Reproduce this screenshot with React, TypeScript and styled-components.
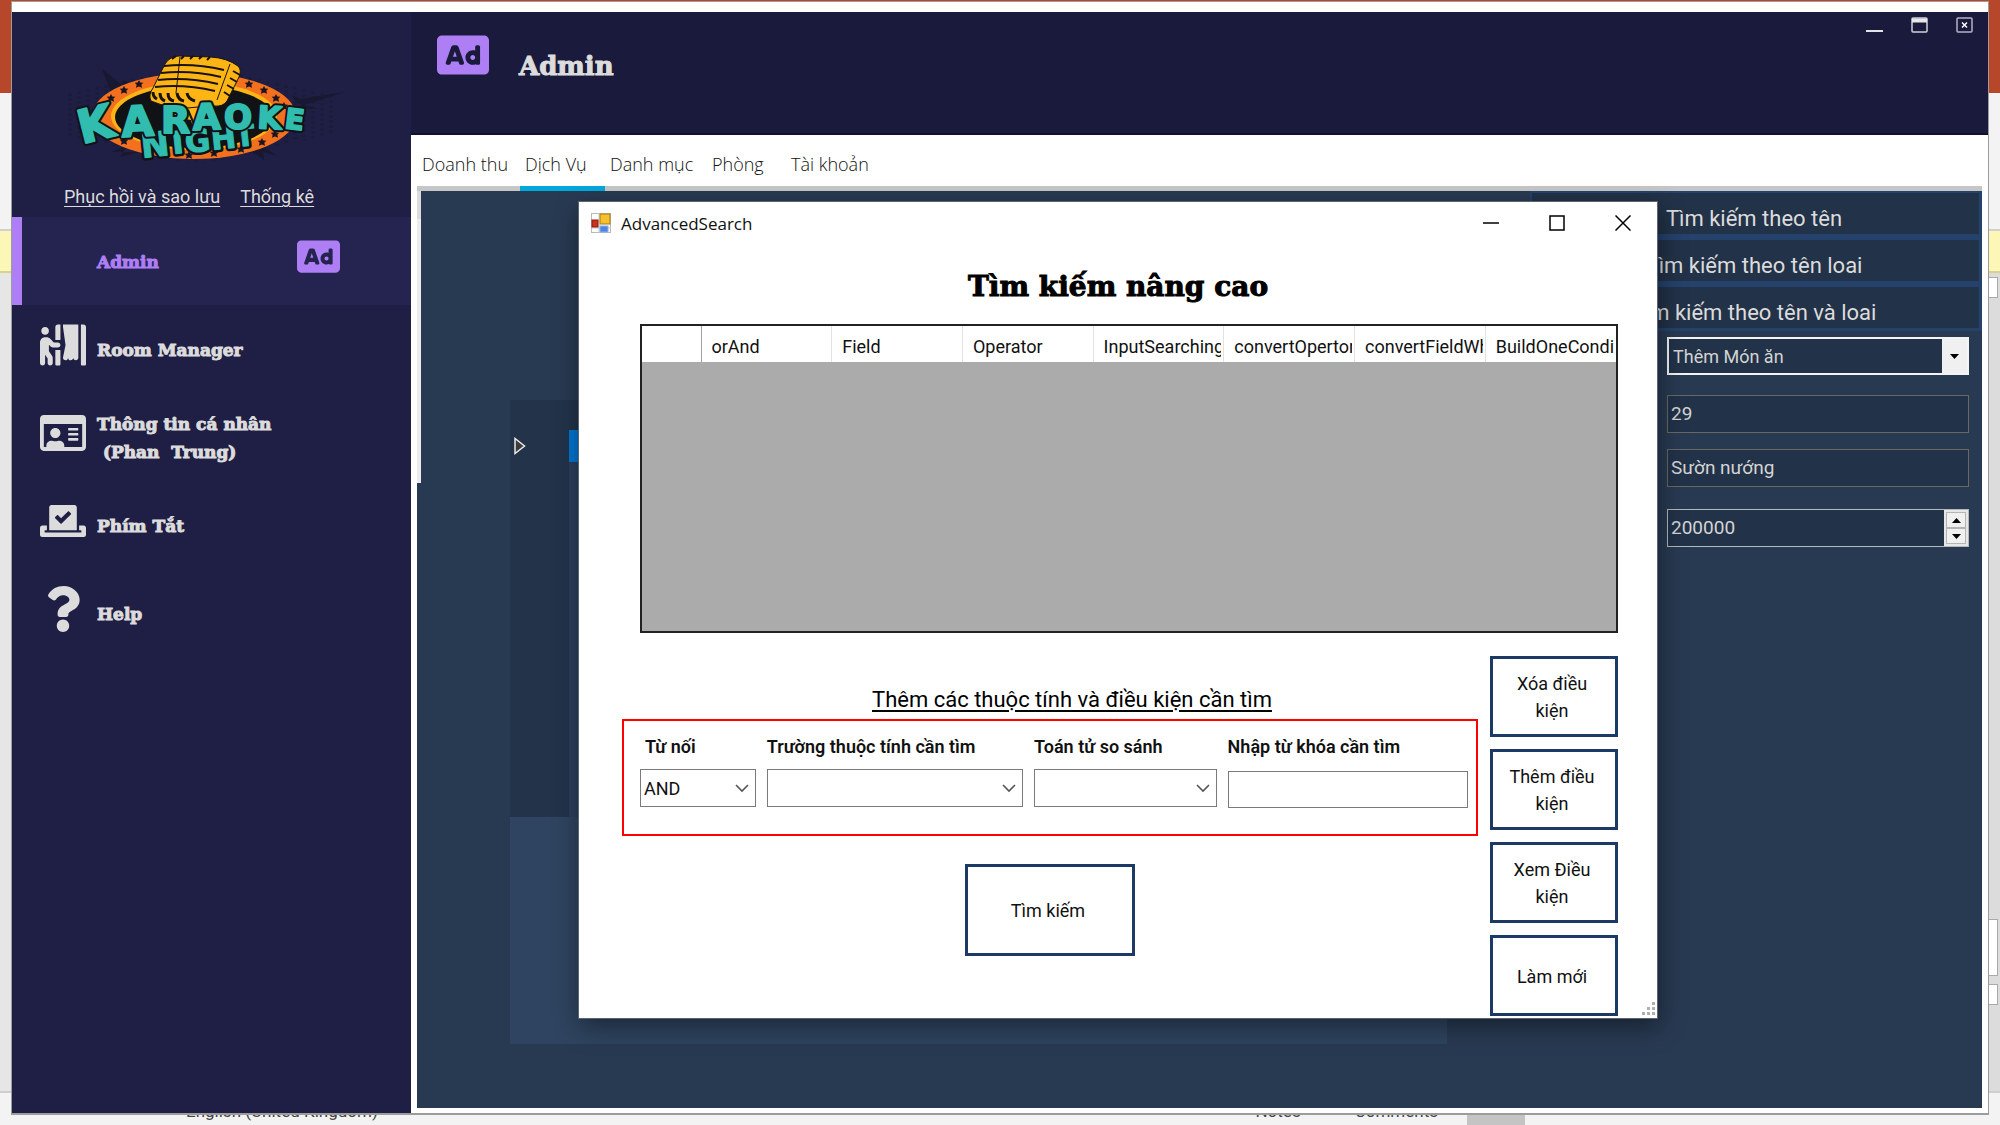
import React from "react";
import styled, { createGlobalStyle } from "styled-components";
import { FaAd, FaPersonBooth, FaRegIdCard, FaVoteYea, FaQuestion } from "react-icons/fa";

const slab = `"DejaVu Serif", serif`;
const sans = `Roboto, "Noto Sans", sans-serif`;

const GlobalStyle = createGlobalStyle`
  * { box-sizing: border-box; }
  body { margin: 0; font-family: ${sans}; font-size: 18px; }
  button, input, select { font: inherit; color: inherit; border-radius: 0; }
`;

/* ---------- Desktop behind the windows ---------- */

const Desktop = styled.div`
  position: relative;
  display: flex;
  flex-direction: column;
  height: 100vh;
  min-height: 1060px;
  overflow: hidden;
  background: #e6e6e6;
`;

const Band = styled.div<{ $h: number; $bg: string; $line?: string }>`
  flex: none;
  height: ${(p) => p.$h}px;
  background: ${(p) => p.$bg};
  border-bottom: ${(p) => (p.$line ? `2px solid ${p.$line}` : "0")};
`;

const Rail = styled.div`
  flex: 1;
  align-self: flex-end;
  display: flex;
  flex-direction: column;
  width: 12px;
  padding: 4px 2px 86px 0;
  background: #dcdcdc;
`;

const RailBox = styled.div<{ $h: number }>`
  height: ${(p) => p.$h}px;
  background: #fff;
  border: 1px solid #a9a9a9;
  & + & { margin-top: 8px; }
  &:nth-child(2) { margin-top: auto; }
`;

const StatusBar = styled.div`
  flex: none;
  display: flex;
  align-items: flex-start;
  gap: 54px;
  height: 34px;
  padding: 8px 475px 0 186px;
  border-top: 2px solid #cfcfcf;
  background: #f3f3f3;
  color: #444;
  font-size: 17px;
  line-height: 20px;
`;

const StatusSpacer = styled.span` flex: 1; `;

const StatusMark = styled.span`
  align-self: stretch;
  width: 58px;
  margin: 0 0 0 -25px;
  background: #c4c4c4;
`;

/* ---------- Main window ---------- */

const AppWindow = styled.div`
  position: absolute;
  inset: 1px 11px 10px 11px;
  display: flex;
  flex-direction: column;
  padding-top: 10px;
  background: #fff;
  border: 1px solid #9c9c9c;
  border-bottom-width: 2px;
`;

const Body = styled.div`
  flex: 1;
  display: flex;
  min-height: 0;
`;

const Sidebar = styled.aside`
  flex: none;
  width: 399px;
  background: #1f1e44;
  color: #dcdcdc;
`;

const Brand = styled.div`
  height: 205px;
  padding: 33px 0 0 48px;
`;

const QuickLinks = styled.div`
  display: flex;
  gap: 20px;
  padding: 4px 0 0 4px;
  font-size: 18px;
  line-height: 24px;
`;

const QuickLink = styled.a`
  color: inherit;
  text-decoration: underline;
  text-underline-offset: 3px;
`;

const NavItem = styled.button<{ $active?: boolean }>`
  display: flex;
  align-items: center;
  gap: 11px;
  width: 100%;
  height: 88px;
  padding: 1px 71px 0 ${(p) => (p.$active ? 75 : 28)}px;
  border: 0;
  border-left: ${(p) => (p.$active ? "10px solid #ae7ef4" : "0")};
  background: ${(p) => (p.$active ? "#25234f" : "transparent")};
  color: ${(p) => (p.$active ? "#ae7ef4" : "inherit")};
  font: bold 17px/28px ${slab};
  -webkit-text-stroke: 1px currentColor;
  text-align: left;
  white-space: pre;
  & > svg { margin-bottom: 10px; }
  & > svg:last-child { margin-left: auto; }
`;

const Main = styled.main`
  flex: 1;
  display: flex;
  flex-direction: column;
  min-width: 0;
`;

const Header = styled.header`
  display: flex;
  align-items: flex-start;
  gap: 30px;
  height: 123px;
  padding: 0 15px 0 26px;
  background: #1a1a3d;
  border-bottom: 2px solid #11112e;
  color: #dcdcdc;
  & > svg { color: #ae7ef4; margin-top: 17px; }
`;

const PageTitle = styled.h1`
  flex: 1;
  margin: 36px 0 0;
  font: bold 26px/36px ${slab};
  -webkit-text-stroke: 1px currentColor;
`;

const WindowButtons = styled.div`
  display: flex;
  gap: 28px;
  padding-top: 5px;
`;

const IconButton = styled.button`
  display: flex;
  padding: 0;
  border: 0;
  background: transparent;
`;

const Tabs = styled.nav`
  display: flex;
  align-items: stretch;
  height: 56px;
  margin: 0 6px;
  border-bottom: 5px solid #c6c6c6;
`;

const Tab = styled.button<{ $w: number; $active?: boolean }>`
  width: ${(p) => p.$w}px;
  margin-bottom: -5px;
  padding: 6px 0 0 5px;
  border: 0;
  border-bottom: ${(p) => (p.$active ? "5px solid #00a8dc" : "5px solid transparent")};
  background: transparent;
  color: #111;
  font-family: "Open Sans", ${sans};
  font-weight: 300;
  font-size: 18px;
  text-align: left;
  white-space: nowrap;
`;

const Panel = styled.section`
  flex: 1;
  display: grid;
  grid-template-columns: 4px 1fr 452px;
  margin: 0 6px 5px;
  background: #283a52;
`;

const Edge = styled.div`
  height: 292px;
  border-top: 28px solid #dcdcdc;
  background: #ececec;
`;

const GridArea = styled.div`
  display: flex;
  padding: 209px 83px 64px 89px;
`;

const BackGrid = styled.div`
  flex: 1;
  background: #2f4460;
`;

const BackRows = styled.div`
  display: grid;
  grid-template: 30px 32px 355px / 59px 1fr;
  background: #22334a;
`;

const BackCell = styled.div<{ $bg?: string }>`
  padding: 7px 4px;
  line-height: 0;
  background: ${(p) => p.$bg ?? "transparent"};
`;

const SearchModes = styled.div`
  display: flex;
  flex-direction: column;
  gap: 6px;
  padding: 2px 3px 3px 2px;
  background: #24426c;
`;

const ModeButton = styled.button`
  height: 41px;
  padding: 11px 3px 0 0;
  border: 0;
  background: #223248;
  color: #dcdcdc;
  font-size: 22px;
  line-height: 30px;
`;

const SideForm = styled.div`
  display: flex;
  flex-direction: column;
  padding: 6px 13px 0 137px;
  color: #d4d4d4;
`;

const DarkBox = styled.div<{ $line: string; $gap: number; $weight?: number }>`
  display: flex;
  height: 38px;
  margin-bottom: ${(p) => p.$gap}px;
  border: ${(p) => p.$weight ?? 1}px solid ${(p) => p.$line};
  background: #223248;
`;

const darkControl = `
  flex: 1;
  min-width: 0;
  border: 0;
  outline: 0;
  background: transparent;
  appearance: none;
`;

const DarkInput = styled.input`
  ${darkControl}
  padding: 0 3px 2px;
  font-size: 19px;
`;

const DarkSelect = styled.select`
  ${darkControl}
  padding: 0 4px;
  font-size: 18px;
`;

const DropArrow = styled.span`
  display: grid;
  place-items: center;
  width: 25px;
  background: #f0f0f0;
`;

const Spinner = styled.span`
  display: flex;
  flex-direction: column;
  width: 24px;
  padding: 2px;
  background: #e6e6e6;
`;

const SpinButton = styled.button`
  flex: 1;
  display: grid;
  place-items: center;
  padding: 0;
  border: 1px solid #b4b4b4;
  background: #f0f0f0;
`;

/* ---------- Advanced search window ---------- */

const Dialog = styled.div`
  position: absolute;
  left: 578px;
  top: 201px;
  width: 1080px;
  padding-bottom: 2px;
  background: #fff;
  border: 1px solid #5c6470;
  box-shadow: 2px 8px 24px rgba(0, 0, 0, 0.42);
  color: #111;
`;

const TitleBar = styled.div`
  display: flex;
  align-items: center;
  gap: 10px;
  height: 42px;
  padding: 0 26px 0 12px;
  font-family: "Open Sans", ${sans};
  font-size: 17px;
`;

const TitleText = styled.span` flex: 1; `;

const TitleButtons = styled.div`
  display: flex;
  gap: 50px;
`;

const DialogTitle = styled.h2`
  margin: 22px 0 16px;
  font: bold 28px/42px ${slab};
  -webkit-text-stroke: 1px currentColor;
  text-align: center;
  color: #000;
`;

const ResultFrame = styled.div`
  height: 309px;
  margin: 0 39px 0 61px;
  border: 2px solid #222;
  background: #ababab;
`;

const ResultTable = styled.table`
  width: 100%;
  table-layout: fixed;
  border-collapse: collapse;
`;

const HeadCell = styled.th<{ $first?: boolean }>`
  width: ${(p) => (p.$first ? "59px" : "auto")};
  height: 36px;
  padding: 6px 2px 0 10px;
  border-right: 1px solid ${(p) => (p.$first ? "#a0a0a0" : "#e2e2e2")};
  background: #fff;
  font-weight: 400;
  font-size: 18px;
  line-height: 24px;
  text-align: left;
  white-space: nowrap;
  &:last-child { border-right: 0; }
`;

const HeadText = styled.span`
  display: block;
  overflow: hidden;
`;

const Lower = styled.div`
  display: flex;
  justify-content: space-between;
  padding: 23px 39px 0 43px;
`;

const Conditions = styled.div`
  display: flex;
  flex-direction: column;
  width: 856px;
`;

const Caption = styled.div`
  padding: 27px 0 0 44px;
  font-size: 22px;
  line-height: 34px;
  text-align: center;
  text-decoration: underline;
  text-underline-offset: 3px;
  color: #000;
`;

const FieldGroup = styled.div`
  display: flex;
  gap: 11px;
  height: 117px;
  margin-top: 2px;
  padding: 14px 8px 0 16px;
  border: 2px solid #f00;
`;

const Field = styled.label<{ $w: number; $indent?: number }>`
  display: flex;
  flex-direction: column;
  gap: 10px;
  width: ${(p) => p.$w}px;
  & > span:first-child {
    padding-left: ${(p) => p.$indent ?? 0}px;
    font-weight: 600;
    font-size: 18px;
    line-height: 24px;
    white-space: nowrap;
  }
`;

const SelectBox = styled.span`
  display: flex;
  align-items: center;
  height: 38px;
  padding-right: 6px;
  border: 1px solid #7a7a7a;
`;

const LightSelect = styled.select`
  ${darkControl}
  height: 100%;
  padding: 0 3px;
`;

const LightInput = styled.input`
  height: 37px;
  margin-top: 2px;
  padding: 0 4px;
  border: 1px solid #7a7a7a;
  outline: 0;
  background: #fff;
`;

const Actions = styled.div`
  display: flex;
  flex-direction: column;
  gap: 12px;
`;

const OutlineButton = styled.button<{ $w: number; $h: number }>`
  width: ${(p) => p.$w}px;
  height: ${(p) => p.$h}px;
  padding: 1px 14px 0 10px;
  border: 3px solid #1b3a66;
  background: #fff;
  font-size: 18px;
  line-height: 27px;
`;

const SubmitRow = styled.div`
  display: flex;
  justify-content: center;
  padding-top: 28px;
`;

const Grip = styled.svg`
  position: absolute;
  right: 2px;
  bottom: 3px;
`;

/* ---------- Drawings ---------- */

const stars = [
  [104, 106], [111, 98], [124, 90], [139, 84], [249, 84], [264, 90], [276, 98], [284, 106],
  [275, 134], [262, 142], [241, 149], [214, 153], [189, 155], [124, 141],
];

const letters: [string, number, number, number, number][] = [
  ["K", 82, 144, 46, -14],
  ["A", 122, 137, 42, -3],
  ["R", 161, 133, 38, 0],
  ["A", 193, 130, 36, -2],
  ["O", 224, 129, 33, 0],
  ["K", 257, 128, 31, 3],
  ["E", 284, 128, 28, 7],
];

const night: [string, number, number, number][] = [
  ["N", 142, 158, 34],
  ["I", 173, 154, 31],
  ["G", 186, 153, 31],
  ["H", 212, 150, 30],
  ["T", 236, 147, 29],
];

const LogoWord = ({ glyphs, color, weight }: { glyphs: (string | number)[][]; color: string; weight: number }) => (
  <g fontFamily="DejaVu Sans" fontWeight="bold" fill={color} stroke={color} strokeWidth={weight} strokeLinejoin="round">
    {glyphs.map(([c, x, y, s, r = -6]) => (
      <text key={x} x={x} y={y} fontSize={s} transform={`rotate(${r} ${x} ${y})`}>{c}</text>
    ))}
  </g>
);

function KaraokeLogo() {
  return (
    <svg width="300" height="132" viewBox="60 45 300 132" role="img" aria-label="Karaoke Night">
      <g fill="#181831">
        {Array.from({ length: 30 }, (_, i) => {
          const x = 70 + i * 9;
          const h = 50 - Math.abs(i - 14) * 2;
          return (
            <path key={i} d={`M${x} ${115 - h}v${h * 2}`} stroke="#1b1b3b" strokeWidth="3" strokeDasharray="3 2" />
          );
        })}
        <path d="M102 69l20 16 2-5 10 6-20 14zM345 92l-45 7-8-4 4 8 22 6-24-1 4 9-14-6zM112 152l16-7-8 12 20-5zM252 152l12 8-1-8 14 4-14-10z" />
      </g>
      <ellipse cx="194" cy="116" rx="102" ry="43" fill="#f3701f" />
      <ellipse cx="194" cy="116" rx="83" ry="34" fill="#fdb515" />
      <ellipse cx="194" cy="117" rx="79" ry="31" fill="#111216" />
      {stars.map(([x, y]) => (
        <path key={`${x}-${y}`} fill="#1b1522"
          d={`M${x} ${y - 4}l1.300 2.600 3 .2-2 2 .8 3-3.100-1.400-3.100 1.400.8-3-2-2 3-.2z`} />
      ))}
      <path d="M163 106h46l-6 22-8 6-4-14-22-4z" fill="#fdb515" />
      <path d="M165 64q5-8 14-8l32 1q16 1 27 9 4 4 1 11l-12 24q-4 6-13 5l-16 1q-24 4-47-6-3-6 2-13z" fill="#fdb515" stroke="#17130c" strokeWidth="1" />
      <g fill="none" stroke="#17130c" strokeWidth="2">
        <path d="M164 66q30-3 60 4M161 73q30-3 60 4M158 80q30-3 60 4M155 87q30-3 60 4" />
        <path d="M180 57l-4 36M230 64l-13 36" strokeWidth="1" />
        <path d="M233 71l7 4M230 78l7 4M227 85l7 4M224 92l6 4" />
        <path d="M153 92q0 5 4 7M160 93q0 6 5 8M168 93q0 7 6 8M177 93q1 7 7 8M187 93q1 6 8 8" strokeWidth="3" />
        <path d="M172 59l4-3M181 59l3-3M190 59l3-3M199 59l3-3M207 60l3-3M195 128l8-20M188 110l6 14" />
      </g>
      <g aria-hidden><LogoWord glyphs={night} color="#111216" weight={6} /></g>
      <LogoWord glyphs={night} color="#30bdb0" weight={1} />
      <g aria-hidden><LogoWord glyphs={letters} color="#111216" weight={6} /></g>
      <LogoWord glyphs={letters} color="#30bdb0" weight={2} />
    </svg>
  );
}

const Chevron = () => (
  <svg width="14" height="9" viewBox="0 0 14 9" fill="none" stroke="#555" strokeWidth="1.600" aria-hidden>
    <path d="M1 1l6 6 6-6" />
  </svg>
);

const Triangle = ({ up }: { up?: boolean }) => (
  <svg width="9" height="5" viewBox="0 0 9 5" aria-hidden>
    <path d={up ? "M0 5L4.500 0 9 5z" : "M0 0h9L4.500 5z"} fill="#000" />
  </svg>
);

const FormIcon = () => (
  <svg width="20" height="20" viewBox="0 0 20 20" aria-hidden>
    <rect x="0.500" y="0.500" width="19" height="19" fill="#fff" stroke="#b9b9b9" />
    <path d="M8 0v20M0 15h20" stroke="#c8c8c8" />
    <rect x="9" y="1" width="10" height="10" fill="#f5c02c" stroke="#a87a10" />
    <rect x="1" y="7" width="6" height="7" fill="#c8321e" stroke="#8d1b0f" />
    <rect x="9" y="13" width="8" height="6" fill="#4c86e0" stroke="#8fb2ee" />
  </svg>
);

const navItems = [
  { label: "Room Manager", icon: <FaPersonBooth size={46} /> },
  { label: "Thông tin cá nhân\n (Phan  Trung)", icon: <FaRegIdCard size={46} /> },
  { label: "Phím Tắt", icon: <FaVoteYea size={46} /> },
  { label: "Help", icon: <FaQuestion size={46} /> },
];

const tabs = [
  { label: "Doanh thu", w: 103 },
  { label: "Dịch Vụ", w: 85 },
  { label: "Danh mục", w: 102 },
  { label: "Phòng", w: 79 },
  { label: "Tài khoản", w: 100 },
];

const columns = ["orAnd", "Field", "Operator", "InputSearching", "convertOpertor", "convertFieldWhere", "BuildOneCondition"];

const actions = ["Xóa điều kiện", "Thêm điều kiện", "Xem Điều kiện", "Làm mới"];

export default function App() {
  return (
    <Desktop>
      <GlobalStyle />
      <Band $h={93} $bg="#b7472a" />
      <Band $h={138} $bg="#f3f3f3" $line="#d0d0d0" />
      <Band $h={42} $bg="#fcf7b6" $line="#d8d28a" />
      <Rail>
        <RailBox $h={21} />
        <RailBox $h={57} />
        <RailBox $h={21} />
      </Rail>
      <StatusBar>
        <span>English (United Kingdom)</span>
        <StatusSpacer />
        <span>Notes</span>
        <span>Comments</span>
        <StatusMark />
      </StatusBar>

      <AppWindow>
        <Body>
          <Sidebar>
            <Brand>
              <KaraokeLogo />
              <QuickLinks>
                <QuickLink href="#backup">Phục hồi và sao lưu</QuickLink>
                <QuickLink href="#stats">Thống kê</QuickLink>
              </QuickLinks>
            </Brand>
            <NavItem $active>
              Admin
              <FaAd size={43} />
            </NavItem>
            {navItems.map((item) => (
              <NavItem key={item.label}>
                {item.icon}
                <span>{item.label}</span>
              </NavItem>
            ))}
          </Sidebar>

          <Main>
            <Header>
              <FaAd size={52} />
              <PageTitle>Admin</PageTitle>
              <WindowButtons>
                <IconButton aria-label="Minimize">
                  <svg width="17" height="17" viewBox="0 0 17 17"><path d="M0 14h17" stroke="#e4e4e4" strokeWidth="2" /></svg>
                </IconButton>
                <IconButton aria-label="Maximize">
                  <svg width="17" height="17" viewBox="0 0 17 17" fill="none" stroke="#d0d0d8"><rect x="1" y="1" width="15" height="14" rx="1" strokeWidth="1.500" /><path d="M1 3.500h15" strokeWidth="4" stroke="#e8e8e8" /></svg>
                </IconButton>
                <IconButton aria-label="Close">
                  <svg width="17" height="17" viewBox="0 0 17 17" fill="none" stroke="#b4b4c4" strokeWidth="1.500"><rect x="1" y="1" width="15" height="14" rx="1" /><path d="M6 5.500l5 5M11 5.500l-5 5" stroke="#fff" /></svg>
                </IconButton>
              </WindowButtons>
            </Header>
            <Tabs>
              {tabs.map((t) => (
                <Tab key={t.label} $w={t.w} $active={t.label === "Dịch Vụ"}>{t.label}</Tab>
              ))}
            </Tabs>
            <Panel>
              <Edge />
              <GridArea>
                <BackGrid>
                  <BackRows>
                    <BackCell />
                    <BackCell />
                    <BackCell>
                      <svg width="12" height="18" viewBox="0 0 12 18"><path d="M1 1.500v15L10.500 9z" fill="#3c3c3c" stroke="#e8e8e8" strokeWidth="1.500" /></svg>
                    </BackCell>
                    <BackCell $bg="#0074d0" />
                    <BackCell />
                    <BackCell $bg="#2c3e5c" />
                  </BackRows>
                </BackGrid>
              </GridArea>
              <div>
                <SearchModes>
                  <ModeButton>Tìm kiếm theo tên</ModeButton>
                  <ModeButton>Tìm kiếm theo tên loai</ModeButton>
                  <ModeButton>Tìm kiếm theo tên và loai</ModeButton>
                </SearchModes>
                <SideForm>
                  <DarkBox $line="#f4f4f4" $gap={20} $weight={2}>
                    <DarkSelect aria-label="Loại">
                      <option>Thêm Món ăn</option>
                    </DarkSelect>
                    <DropArrow><Triangle /></DropArrow>
                  </DarkBox>
                  <DarkBox $line="#6b6864" $gap={16}>
                    <DarkInput aria-label="Mã" defaultValue="29" />
                  </DarkBox>
                  <DarkBox $line="#6b6864" $gap={22}>
                    <DarkInput aria-label="Tên" defaultValue="Sườn nướng" />
                  </DarkBox>
                  <DarkBox $line="#b8b8b8" $gap={0}>
                    <DarkInput aria-label="Giá" defaultValue="200000" />
                    <Spinner>
                      <SpinButton aria-label="Tăng"><Triangle up /></SpinButton>
                      <SpinButton aria-label="Giảm"><Triangle /></SpinButton>
                    </Spinner>
                  </DarkBox>
                </SideForm>
              </div>
            </Panel>
          </Main>
        </Body>
      </AppWindow>

      <Dialog role="dialog" aria-label="AdvancedSearch">
        <TitleBar>
          <FormIcon />
          <TitleText>AdvancedSearch</TitleText>
          <TitleButtons>
            <IconButton aria-label="Minimize">
              <svg width="16" height="16" viewBox="0 0 16 16"><path d="M0 8h16" stroke="#000" strokeWidth="1.500" /></svg>
            </IconButton>
            <IconButton aria-label="Maximize">
              <svg width="16" height="16" viewBox="0 0 16 16"><rect x="1" y="1" width="14" height="14" fill="none" stroke="#000" strokeWidth="1.500" /></svg>
            </IconButton>
            <IconButton aria-label="Close">
              <svg width="16" height="16" viewBox="0 0 16 16"><path d="M0.500 0.500l15 15M15.500 0.500l-15 15" stroke="#000" strokeWidth="1.500" /></svg>
            </IconButton>
          </TitleButtons>
        </TitleBar>
        <DialogTitle>Tìm kiếm nâng cao</DialogTitle>
        <ResultFrame>
          <ResultTable>
            <thead>
              <tr>
                <HeadCell $first />
                {columns.map((c) => <HeadCell key={c}><HeadText>{c}</HeadText></HeadCell>)}
              </tr>
            </thead>
          </ResultTable>
        </ResultFrame>
        <Lower>
          <Conditions>
            <Caption>Thêm các thuộc tính và điều kiện cần tìm</Caption>
            <FieldGroup>
              <Field $w={116} $indent={5}>
                <span>Từ nối</span>
                <SelectBox>
                  <LightSelect><option>AND</option><option>OR</option></LightSelect>
                  <Chevron />
                </SelectBox>
              </Field>
              <Field $w={257}>
                <span>Trường thuộc tính cần tìm</span>
                <SelectBox><LightSelect><option /></LightSelect><Chevron /></SelectBox>
              </Field>
              <Field $w={183}>
                <span>Toán tử so sánh</span>
                <SelectBox><LightSelect><option /></LightSelect><Chevron /></SelectBox>
              </Field>
              <Field $w={241}>
                <span>Nhập từ khóa cần tìm</span>
                <LightInput />
              </Field>
            </FieldGroup>
            <SubmitRow>
              <OutlineButton $w={170} $h={92}>Tìm kiếm</OutlineButton>
            </SubmitRow>
          </Conditions>
          <Actions>
            {actions.map((a) => <OutlineButton key={a} $w={128} $h={81}>{a}</OutlineButton>)}
          </Actions>
        </Lower>
        <Grip width="14" height="14" viewBox="0 0 14 14" fill="#b0b0b0">
          <path d="M11 1h3v3h-3zM11 6h3v3h-3zM6 6h3v3H6zM11 11h3v3h-3zM6 11h3v3H6zM1 11h3v3H1z" />
        </Grip>
      </Dialog>
    </Desktop>
  );
}
